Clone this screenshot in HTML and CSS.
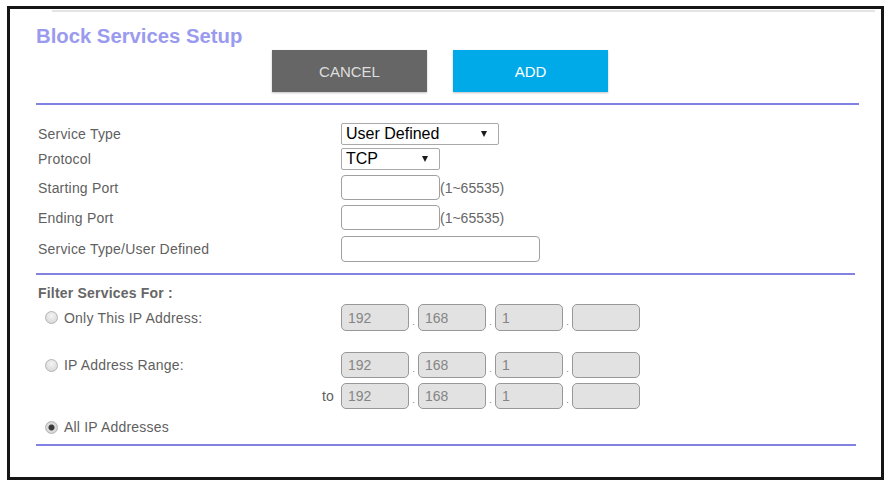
FILE: index.html
```html
<!DOCTYPE html>
<html>
<head>
<meta charset="utf-8">
<link rel="stylesheet" href="styles.css">
</head>
<body>
<div class="frame">
  <div class="topline"></div>
  <div class="content">
    <div class="title">Block Services Setup</div>
    <div class="actions">
      <button class="btn btn-cancel">CANCEL</button>
      <button class="btn btn-add">ADD</button>
    </div>
    <div class="rule"></div>

    <div class="field f1">
      <div class="label">Service Type</div>
      <div class="select sel-wide"><span>User Defined</span><i class="caret"></i></div>
    </div>
    <div class="field f2">
      <div class="label">Protocol</div>
      <div class="select sel-narrow"><span>TCP</span><i class="caret"></i></div>
    </div>
    <div class="field f3">
      <div class="label">Starting Port</div>
      <div class="input in-port"></div><span class="hint">(1~65535)</span>
    </div>
    <div class="field f4">
      <div class="label">Ending Port</div>
      <div class="input in-port"></div><span class="hint">(1~65535)</span>
    </div>
    <div class="field f5">
      <div class="label">Service Type/User Defined</div>
      <div class="input in-wide"></div>
    </div>
    <div class="rule rule2"></div>

    <div class="filter-title">Filter Services For :</div>
    <div class="iprow r1">
      <div class="label radio-label"><span class="radio"></span>Only This IP Address:</div>
      <div class="ip">
        <div class="oct">192</div><span class="dot">.</span>
        <div class="oct">168</div><span class="dot">.</span>
        <div class="oct">1</div><span class="dot">.</span>
        <div class="oct"></div>
      </div>
    </div>
    <div class="iprow r2">
      <div class="label radio-label"><span class="radio"></span>IP Address Range:</div>
      <div class="ip">
        <div class="oct">192</div><span class="dot">.</span>
        <div class="oct">168</div><span class="dot">.</span>
        <div class="oct">1</div><span class="dot">.</span>
        <div class="oct"></div>
      </div>
    </div>
    <div class="iprow r3">
      <div class="label to-label">to</div>
      <div class="ip">
        <div class="oct">192</div><span class="dot">.</span>
        <div class="oct">168</div><span class="dot">.</span>
        <div class="oct">1</div><span class="dot">.</span>
        <div class="oct"></div>
      </div>
    </div>
    <div class="iprow r4">
      <div class="label radio-label"><span class="radio checked"></span>All IP Addresses</div>
    </div>
    <div class="rule rule3"></div>
  </div>
</div>
</body>
</html>
```

FILE: styles.css
```css
html, body {
  margin: 0;
  padding: 0;
  background: #ffffff;
}
body {
  font-family: "Liberation Sans", Arial, sans-serif;
}
.frame {
  margin: 6px 0 0 7px;
  width: 871px;
  height: 468px;
  border: 3px solid #151515;
  background: #ffffff;
}
.topline {
  height: 2px;
  background: #e4e4e4;
  margin: 1px 6px 0 42px;
}
.content {
  padding: 0 22px 0 26px;
}
.title {
  margin-top: 13px;
  font-size: 20.3px;
  line-height: 23px;
  font-weight: bold;
  color: #9a9aee;
}
.actions {
  display: flex;
  gap: 26px;
  margin: 2px 0 0 236px;
}
.btn {
  width: 155px;
  height: 42px;
  border: 0;
  padding: 0;
  font-family: "Liberation Sans", Arial, sans-serif;
  font-size: 15px;
  box-shadow: 0 1px 2px rgba(0,0,0,0.25);
}
.btn-cancel {
  background: #666666;
  color: #dedede;
}
.btn-add {
  background: #00aae9;
  color: #ffffff;
}
.rule {
  height: 2px;
  background: #8282e2;
  margin-top: 11px;
}
.field {
  display: flex;
  align-items: center;
}
.label {
  width: 303px;
  padding-left: 2px;
  flex: none;
  font-size: 14px;
  letter-spacing: 0.2px;
  color: #5f5f5f;
}
.f1 { height: 22px; margin-top: 18px; }
.f2 { height: 22px; margin-top: 3px; }
.f3 { height: 25px; margin-top: 5px; }
.f4 { height: 25px; margin-top: 5px; }
.f5 { height: 26px; margin-top: 6px; }
.select {
  box-sizing: border-box;
  height: 22px;
  display: flex;
  align-items: center;
  border: 1px solid #a9a9a9;
  border-radius: 2px;
  padding-left: 4px;
  font-size: 16px;
  color: #000;
  background: #fff;
}
.sel-wide { width: 158px; }
.sel-narrow { width: 99px; }
.caret {
  margin-left: auto;
  margin-right: 11px;
  width: 0;
  height: 0;
  border-left: 3px solid transparent;
  border-right: 3px solid transparent;
  border-top: 6px solid #1a1a1a;
}
.input {
  box-sizing: border-box;
  height: 100%;
  border: 1px solid #a0a0a0;
  border-radius: 4px;
  background: #fff;
}
.in-port { width: 99px; }
.in-wide { width: 199px; }
.hint {
  font-size: 14px;
  color: #666;
}
.rule2 { margin-top: 11px; margin-right: 4px; }
.filter-title {
  margin-top: 10px;
  padding-left: 2px;
  line-height: 16px;
  font-size: 14px;
  font-weight: bold;
  letter-spacing: 0.2px;
  color: #666;
}
.iprow {
  display: flex;
  align-items: center;
}
.r1 { height: 27px; margin-top: 3px; }
.r2 { height: 26px; margin-top: 21px; }
.r3 { height: 26px; margin-top: 5px; }
.r4 { height: 18px; margin-top: 9px; }
.radio-label {
  display: flex;
  align-items: center;
  padding-left: 9px;
  width: 296px;
}
.radio {
  box-sizing: border-box;
  width: 13px;
  height: 13px;
  border-radius: 50%;
  border: 1px solid #b4b4b4;
  background: radial-gradient(circle at 50% 35%, #f4f4f4 0%, #dcdcdc 70%, #cfcfcf 100%);
  margin-right: 6px;
  flex: none;
}
.radio.checked {
  background: radial-gradient(circle at 50% 50%, #3a3a3a 0, #3a3a3a 2.5px, #dcdcdc 3.5px, #cfcfcf 100%);
}
.to-label {
  text-align: right;
  width: 298px;
  padding-right: 7px;
  padding-left: 0;
}
.ip {
  display: flex;
  align-items: stretch;
  height: 100%;
}
.oct {
  box-sizing: border-box;
  width: 68px;
  height: 100%;
  border: 1px solid #989898;
  border-radius: 5px;
  background: #e2e2e2;
  padding-left: 6px;
  display: flex;
  align-items: center;
  font-size: 14px;
  color: #858585;
}
.dot {
  width: 9px;
  font-size: 9px;
  color: #777;
  display: flex;
  align-items: flex-end;
  justify-content: center;
  padding-bottom: 4px;
  box-sizing: border-box;
}
.rule3 { margin-top: 8px; margin-right: 3px; }
```
